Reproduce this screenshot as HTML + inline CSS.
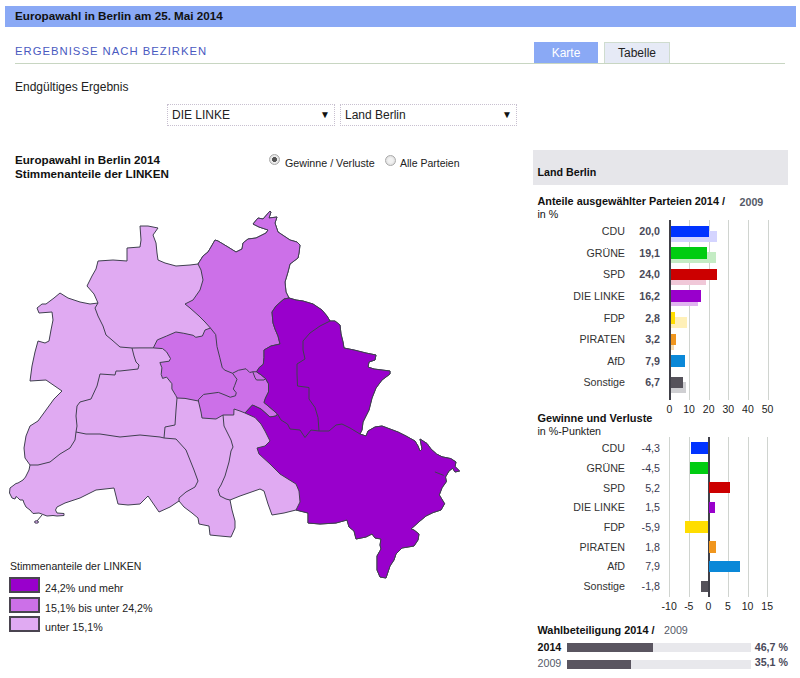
<!DOCTYPE html>
<html><head><meta charset="utf-8"><style>
html,body{margin:0;padding:0;background:#fff;width:800px;height:678px;overflow:hidden;position:relative;font-family:"Liberation Sans",sans-serif;}
.t{position:absolute;white-space:nowrap;line-height:1;}
.r{position:absolute;}
</style></head><body>
<svg width="800" height="678" style="position:absolute;left:0;top:0">
<g stroke="#404050" stroke-width="1" stroke-linejoin="round" fill-rule="nonzero">
<polygon points="87,286 92,276 96,269 98,261 113,260 127,261 127,248 140,247 141,240 140,226 148,226 158,228 153,235 156,243 157,253 158,260 165,263 176,266 190,265 198,264 203,256 208,252 211,247 215,240 218,241 228,247 236,252 242,249 243,243 248,239 256,238 266,233 268,230 259,227 253,224 258,218 263,219 270,211 271,212 269,218 277,217 275,223 278,232 290,240 297,242 300,245 299,253 298,258 290,264 288,272 285,282 286,292 289,298 296,300 303,301 313,304 322,310 327,316 330,321 335,321 340,325 341,334 343,342 344,348 354,350 366,353 376,355 375,360 369,362 368,367 374,369 382,370 390,371 390,374 382,380 376,388 372,398 369,410 366,416 363,422 362,430 360,434 366,436 368,431 375,427 382,426 390,429 398,432 406,436 415,441 418,446 420,451 422,449 420,439 427,443.5 431,449 436.6,454 442,456.8 450.8,458.6 456,462 455,466.5 459.6,471 455,472 452.6,468.3 449,471 445.5,477 446.4,481.6 442,487.8 439.3,494.9 444.6,503.7 441,510 433,512.6 426,516 420,521 411,529 414,530 419,534 418,540 414,546 402,548 396,554 394,560 390,566 386,578 380,577 377,570 377,556 381,549 380,545 381,539 375,538 372,534 366,537 356,539 354,531 349,527 347,520 336,523 320,524 308,523 308,513 296,510 284,513 272,515 268,504 264,491 260,489 240,496 230,500 232,510 235,521 235,528 231,537 220,536 210,535 209,526 199,524 198,518 192,513 184,507 179,501 170,507 159,512 148,496 140,504 128,505 118,504 116,496 114,488 96,490 80,498 65,503 57,507 55.5,510 57,513 64,513.5 64,515.5 57,516 53,515.5 47,516 43,514.5 39,513 33,513.5 30,510 26,507 24,503 23,500 20,500 17.5,497.5 16,496.5 15,499 12,498 9.5,493 10,488 16,483.5 18,483 23,480 25.5,477 29,470 30,465 25,458 24,448 26,436 30,426 38,421 46,410 54,399 62,391 46,380 30,381 32,366 35,352 38,341 45,343 49,341 51,330 53,320 52,312 39,313 37,308 42,304 46,304 54,298 60,293 68,298 80,302 90,304 98,303 94,294" fill="#e0aaf2"/>
<polygon points="198,264 203,256 208,252 211,247 215,240 218,241 228,247 236,252 242,249 243,243 248,239 256,238 266,233 268,230 259,227 253,224 258,218 263,219 270,211 271,212 269,218 277,217 275,223 278,232 290,240 297,242 300,245 299,253 298,258 290,264 288,272 285,282 286,292 289,298 284,299 276,306 272,312 273,323 275,329 278,336 280,344 271,346 264,350 264,357.5 263.3,364.3 259.5,367.25 256.5,371.75 261,374.75 265.5,378.5 268.5,383.75 268.5,392 265.5,398 264,402.5 270,407.5 277.5,414 276,416 270,417 261,409 252.5,405 245,413 240,411 234,409 233.75,415 223,415 216,419 202,418 201,412 198.4,401 185,398.4 177,398 175.9,395.7 171.9,389 171.9,383.7 166.6,377.1 162.6,378.4 161.2,374.4 161.9,367.8 159.9,362.5 169.2,361.2 170.5,358.5 166.6,351.9 162.6,348.6 153.3,347.9 157.3,339.9 166.6,336 175.9,332 183.8,333.3 193.1,335.3 195.8,337.3 202.4,336 205,330 210.4,328 205,322 199,316 190,308 185,304 193,300 200,290 203,280 201,270" fill="#cc70e8"/>
<polygon points="289,298 296,300 303,301 313,304 322,310 327,316 330,321 335,321 340,325 341,334 343,342 344,348 354,350 366,353 376,355 375,360 369,362 368,367 374,369 382,370 390,371 390,374 382,380 376,388 372,398 369,410 366,416 363,422 362,430 360,434 366,436 368,431 375,427 382,426 390,429 398,432 406,436 415,441 418,446 420,451 422,449 420,439 427,443.5 431,449 436.6,454 442,456.8 450.8,458.6 456,462 455,466.5 459.6,471 455,472 452.6,468.3 449,471 445.5,477 446.4,481.6 442,487.8 439.3,494.9 444.6,503.7 441,510 433,512.6 426,516 420,521 411,529 414,530 419,534 418,540 414,546 402,548 396,554 394,560 390,566 386,578 380,577 377,570 377,556 381,549 380,545 381,539 375,538 372,534 366,537 356,539 354,531 349,527 347,520 336,523 320,524 308,523 308,513 296,510 300,502 299,491 296,484 280,474 270,464 259,454 257,448 265,446 270,441 265,431 261,424 255,417.5 245,413 252.5,405 261,409 270,417 276,416 277.5,414 270,407.5 264,402.5 265.5,398 268.5,392 268.5,383.75 265.5,378.5 261,374.75 256.5,371.75 259.5,367.25 263.3,364.3 264,357.5 264,350 271,346 280,344 278,336 275,329 273,323 272,312 276,306 284,299" fill="#9900cc"/>
</g><g stroke="#404050" stroke-width="1" fill="none" stroke-linejoin="round">
<polyline points="98,303 95,308 98,316 103,326 106,335 112,340 120,347 132,348 140,347.9 153.3,347.9"/>
<polyline points="132,348 134,356 136,362 139,365 138,369 120,371 116,371 115,375 100,374 97,386 91,399 80,402 77,406 76,416 77,426 76,432"/>
<polyline points="76,432 75,440 70,448 60,454 50,462 38,465 30,465"/>
<polyline points="76,432 86,434 100,434 120,437 140,435 160,437 164,438"/>
<polyline points="177,398 176,410 175,425 165,427 164,438"/>
<polyline points="164,438 176,439 186,450 190,460 194,470 198,481 195,487 186,492 179,498 179,501"/>
<polyline points="223,415 224,426 231,440 233,447 231,451 229,462 225,476 221,485 218,490 220,496 226,499 230,500"/>
<polyline points="210.4,328 215.7,334.6 217,346.6 219.7,357.2 222.3,367.8 225,370.25 232.5,373.25"/>
<polyline points="232.5,373.25 237,379.25 234.75,385.25 233.25,389 236.25,392.75 235.5,395.75 230.25,397.25 225,395 218.4,392.4 203.7,394.4 198.4,399.7 198.4,401"/>
<polyline points="232.5,373.25 238.5,370.25 246,368.75 249.75,372.5 252.75,371.75 256.5,371.75"/>
<polyline points="252.75,371.75 255,377.75 256.5,380 264,380 265.5,378.5"/>
<polyline points="330,321 320,326 310,333 303,341 303,350 305,359 297,364 297,374 297.5,386 309,387.5 309,399 315,407.5 318,417.5 319,431"/>
<polyline points="277.5,414 281,420 287.5,424 290,429 300,430 305,437.5 311,430 319,431 329,431 336,425 342,424 350,428 360,434"/>
<polyline points="434.9,471.9 443.7,475.4"/>
<polyline points="42,515 37,521"/>
<ellipse cx="36.5" cy="522" rx="2" ry="1.2" fill="#e0aaf2"/>
</g></svg>
<div class="r" style="left:5px;top:6px;width:791px;height:20.5px;background:#8aa9f5;"></div>
<div class="t" style="left:15px;top:10.20px;font-size:11.7px;font-weight:bold;color:#111;">Europawahl in Berlin am 25. Mai 2014</div>
<div class="t" style="left:15px;top:46.43px;font-size:11.3px;font-weight:normal;color:#4a5abf;letter-spacing:1.0px;">ERGEBNISSE NACH BEZIRKEN</div>
<div class="r" style="left:15px;top:63px;width:770px;height:1px;background:#c8d6c2;"></div>
<div class="r" style="left:534px;top:42px;width:64px;height:21px;background:#8aa9f5;"></div>
<div class="t" style="left:516px;width:100px;text-align:center;top:47.34px;font-size:12px;font-weight:normal;color:#fff;">Karte</div>
<div class="r" style="left:604px;top:42px;width:66px;height:21px;background:#e6eaf6;box-sizing:border-box;border:1px solid #cfdccf;border-bottom:none;"></div>
<div class="t" style="left:587px;width:100px;text-align:center;top:47.34px;font-size:12px;font-weight:normal;color:#222;">Tabelle</div>
<div class="t" style="left:15px;top:80.64px;font-size:12px;font-weight:normal;color:#222;">Endgültiges Ergebnis</div>
<div class="r" style="left:167px;top:104px;width:168px;height:21.5px;background:#fff;box-sizing:border-box;border:1px dotted #c8c0d0;"></div>
<div class="t" style="left:172px;top:109.34px;font-size:12px;font-weight:normal;color:#222;">DIE LINKE</div>
<div class="t" style="left:320px;top:109.53px;font-size:10px;font-weight:normal;color:#111;">&#9660;</div>
<div class="r" style="left:340px;top:104px;width:177px;height:21.5px;background:#fff;box-sizing:border-box;border:1px dotted #c8c0d0;"></div>
<div class="t" style="left:345px;top:109.34px;font-size:12px;font-weight:normal;color:#222;">Land Berlin</div>
<div class="t" style="left:502px;top:109.53px;font-size:10px;font-weight:normal;color:#111;">&#9660;</div>
<div class="t" style="left:15px;top:154.14px;font-size:11.65px;font-weight:bold;color:#111;">Europawahl in Berlin 2014</div>
<div class="t" style="left:15px;top:167.94px;font-size:11.65px;font-weight:bold;color:#111;">Stimmenanteile der LINKEN</div>
<div class="r" style="left:269px;top:154px;width:11px;height:11px;border-radius:50%;background:radial-gradient(circle,#555 0 2.2px,#eee 2.8px,#ddd 5px);border:1px solid #aaa;box-sizing:border-box"></div>
<div class="t" style="left:285px;top:157.94px;font-size:10.7px;font-weight:normal;color:#222;">Gewinne / Verluste</div>
<div class="r" style="left:385px;top:154.5px;width:11px;height:11px;border-radius:50%;background:radial-gradient(circle,#f2f2f2 0 2px,#ddd 5px);border:1px solid #aaa;box-sizing:border-box"></div>
<div class="t" style="left:400px;top:158.11px;font-size:10.5px;font-weight:normal;color:#222;">Alle Parteien</div>
<div class="r" style="left:533px;top:150px;width:255px;height:35px;background:#e6e6ea;"></div>
<div class="t" style="left:537.5px;top:167.19px;font-size:10.7px;font-weight:bold;color:#111;">Land Berlin</div>
<div class="t" style="left:537.5px;top:196.42px;font-size:10.85px;font-weight:bold;color:#111;">Anteile ausgewählter Parteien 2014 /</div>
<div class="t" style="left:739.5px;top:196.54px;font-size:10.7px;font-weight:bold;color:#555a68;">2009</div>
<div class="t" style="left:537.5px;top:209.44px;font-size:10.7px;font-weight:normal;color:#111;">in %</div>
<div class="r" style="left:669px;top:220px;width:2px;height:179.5px;background:#404048;"></div>
<div class="t" style="left:619.5px;width:100px;text-align:center;top:403.71px;font-size:10.5px;font-weight:normal;color:#222;">0</div>
<div class="r" style="left:689px;top:220px;width:1px;height:179.5px;background:#d0d4d0;"></div>
<div class="t" style="left:639.1px;width:100px;text-align:center;top:403.71px;font-size:10.5px;font-weight:normal;color:#222;">10</div>
<div class="r" style="left:709px;top:220px;width:1px;height:179.5px;background:#d0d4d0;"></div>
<div class="t" style="left:658.7px;width:100px;text-align:center;top:403.71px;font-size:10.5px;font-weight:normal;color:#222;">20</div>
<div class="r" style="left:728px;top:220px;width:1px;height:179.5px;background:#d0d4d0;"></div>
<div class="t" style="left:678.3px;width:100px;text-align:center;top:403.71px;font-size:10.5px;font-weight:normal;color:#222;">30</div>
<div class="r" style="left:748px;top:220px;width:1px;height:179.5px;background:#d0d4d0;"></div>
<div class="t" style="left:697.9px;width:100px;text-align:center;top:403.71px;font-size:10.5px;font-weight:normal;color:#222;">40</div>
<div class="r" style="left:768px;top:220px;width:1px;height:179.5px;background:#d0d4d0;"></div>
<div class="t" style="left:717.5px;width:100px;text-align:center;top:403.71px;font-size:10.5px;font-weight:normal;color:#222;">50</div>
<div class="r" style="left:671px;top:230.6px;width:46.128px;height:11px;background:#d4d4ff;"></div>
<div class="r" style="left:671px;top:225.6px;width:37.7px;height:11.5px;background:#0033ff;"></div>
<div class="t" style="right:175px;top:226.24px;font-size:10.7px;font-weight:normal;color:#333;">CDU</div>
<div class="t" style="right:140px;top:226.24px;font-size:10.7px;font-weight:bold;color:#4a4a5a;">20,0</div>
<div class="r" style="left:671px;top:252.2px;width:44.756px;height:11px;background:#c4ecc4;"></div>
<div class="r" style="left:671px;top:247.2px;width:35.936px;height:11.5px;background:#00cc11;"></div>
<div class="t" style="right:175px;top:247.84px;font-size:10.7px;font-weight:normal;color:#333;">GRÜNE</div>
<div class="t" style="right:140px;top:247.84px;font-size:10.7px;font-weight:bold;color:#4a4a5a;">19,1</div>
<div class="r" style="left:671px;top:273.8px;width:35.348px;height:11px;background:#f0c8d8;"></div>
<div class="r" style="left:671px;top:268.8px;width:45.54px;height:11.5px;background:#cc0000;"></div>
<div class="t" style="right:175px;top:269.44px;font-size:10.7px;font-weight:normal;color:#333;">SPD</div>
<div class="t" style="right:140px;top:269.44px;font-size:10.7px;font-weight:bold;color:#4a4a5a;">24,0</div>
<div class="r" style="left:671px;top:295.4px;width:27.311999999999998px;height:11px;background:#e0b4f0;"></div>
<div class="r" style="left:671px;top:290.4px;width:30.252px;height:11.5px;background:#9900cc;"></div>
<div class="t" style="right:175px;top:291.04px;font-size:10.7px;font-weight:normal;color:#333;">DIE LINKE</div>
<div class="t" style="right:140px;top:291.04px;font-size:10.7px;font-weight:bold;color:#4a4a5a;">16,2</div>
<div class="r" style="left:671px;top:317.0px;width:15.552px;height:11px;background:#fff0b8;"></div>
<div class="r" style="left:671px;top:312.0px;width:3.9879999999999995px;height:11.5px;background:#ffdd00;"></div>
<div class="t" style="right:175px;top:312.64px;font-size:10.7px;font-weight:normal;color:#333;">FDP</div>
<div class="t" style="right:140px;top:312.64px;font-size:10.7px;font-weight:bold;color:#4a4a5a;">2,8</div>
<div class="r" style="left:671px;top:338.6px;width:2.5px;height:11px;background:#f8dcb0;"></div>
<div class="r" style="left:671px;top:333.6px;width:4.772px;height:11.5px;background:#f0961e;"></div>
<div class="t" style="right:175px;top:334.24px;font-size:10.7px;font-weight:normal;color:#333;">PIRATEN</div>
<div class="t" style="right:140px;top:334.24px;font-size:10.7px;font-weight:bold;color:#4a4a5a;">3,2</div>
<div class="r" style="left:671px;top:355.20000000000005px;width:13.984px;height:11.5px;background:#0a88d8;"></div>
<div class="t" style="right:175px;top:355.84px;font-size:10.7px;font-weight:normal;color:#333;">AfD</div>
<div class="t" style="right:140px;top:355.84px;font-size:10.7px;font-weight:bold;color:#4a4a5a;">7,9</div>
<div class="r" style="left:671px;top:381.8px;width:15.16px;height:11px;background:#cfcfd2;"></div>
<div class="r" style="left:671px;top:376.8px;width:11.632px;height:11.5px;background:#55525a;"></div>
<div class="t" style="right:175px;top:377.44px;font-size:10.7px;font-weight:normal;color:#333;">Sonstige</div>
<div class="t" style="right:140px;top:377.44px;font-size:10.7px;font-weight:bold;color:#4a4a5a;">6,7</div>
<div class="t" style="left:537.5px;top:413.09px;font-size:11px;font-weight:bold;color:#111;">Gewinne und Verluste</div>
<div class="t" style="left:537.5px;top:426.34px;font-size:10.7px;font-weight:normal;color:#222;">in %-Punkten</div>
<div class="r" style="left:669px;top:437px;width:1px;height:159.5px;background:#d0d4d0;"></div>
<div class="t" style="left:619.1999999999999px;width:100px;text-align:center;top:600.71px;font-size:10.5px;font-weight:normal;color:#222;">-10</div>
<div class="r" style="left:689px;top:437px;width:1px;height:159.5px;background:#d0d4d0;"></div>
<div class="t" style="left:638.8px;width:100px;text-align:center;top:600.71px;font-size:10.5px;font-weight:normal;color:#222;">-5</div>
<div class="r" style="left:707.5px;top:437px;width:2px;height:159.5px;background:#404048;"></div>
<div class="t" style="left:658.4px;width:100px;text-align:center;top:600.71px;font-size:10.5px;font-weight:normal;color:#222;">0</div>
<div class="r" style="left:728px;top:437px;width:1px;height:159.5px;background:#d0d4d0;"></div>
<div class="t" style="left:678.0px;width:100px;text-align:center;top:600.71px;font-size:10.5px;font-weight:normal;color:#222;">5</div>
<div class="r" style="left:748px;top:437px;width:1px;height:159.5px;background:#d0d4d0;"></div>
<div class="t" style="left:697.6px;width:100px;text-align:center;top:600.71px;font-size:10.5px;font-weight:normal;color:#222;">10</div>
<div class="r" style="left:767px;top:437px;width:1px;height:159.5px;background:#d0d4d0;"></div>
<div class="t" style="left:717.1999999999999px;width:100px;text-align:center;top:600.71px;font-size:10.5px;font-weight:normal;color:#222;">15</div>
<div class="r" style="left:691.144px;top:442.4px;width:16.855999999999998px;height:11.5px;background:#0033ff;"></div>
<div class="t" style="right:175px;top:443.04px;font-size:10.7px;font-weight:normal;color:#333;">CDU</div>
<div class="t" style="right:140px;top:443.04px;font-size:10.7px;font-weight:normal;color:#3a3a50;">-4,3</div>
<div class="r" style="left:690.36px;top:462.14px;width:17.64px;height:11.5px;background:#00cc11;"></div>
<div class="t" style="right:175px;top:462.78px;font-size:10.7px;font-weight:normal;color:#333;">GRÜNE</div>
<div class="t" style="right:140px;top:462.78px;font-size:10.7px;font-weight:normal;color:#3a3a50;">-4,5</div>
<div class="r" style="left:709.4px;top:481.88px;width:20.384px;height:11.5px;background:#cc0000;"></div>
<div class="t" style="right:175px;top:482.52px;font-size:10.7px;font-weight:normal;color:#333;">SPD</div>
<div class="t" style="right:140px;top:482.52px;font-size:10.7px;font-weight:normal;color:#3a3a50;">5,2</div>
<div class="r" style="left:709.4px;top:501.62px;width:5.88px;height:11.5px;background:#9900cc;"></div>
<div class="t" style="right:175px;top:502.26px;font-size:10.7px;font-weight:normal;color:#333;">DIE LINKE</div>
<div class="t" style="right:140px;top:502.26px;font-size:10.7px;font-weight:normal;color:#3a3a50;">1,5</div>
<div class="r" style="left:684.872px;top:521.36px;width:23.128px;height:11.5px;background:#ffdd00;"></div>
<div class="t" style="right:175px;top:522.00px;font-size:10.7px;font-weight:normal;color:#333;">FDP</div>
<div class="t" style="right:140px;top:522.00px;font-size:10.7px;font-weight:normal;color:#3a3a50;">-5,9</div>
<div class="r" style="left:709.4px;top:541.0999999999999px;width:7.056px;height:11.5px;background:#f0961e;"></div>
<div class="t" style="right:175px;top:541.74px;font-size:10.7px;font-weight:normal;color:#333;">PIRATEN</div>
<div class="t" style="right:140px;top:541.74px;font-size:10.7px;font-weight:normal;color:#3a3a50;">1,8</div>
<div class="r" style="left:709.4px;top:560.8399999999999px;width:30.968px;height:11.5px;background:#0a88d8;"></div>
<div class="t" style="right:175px;top:561.48px;font-size:10.7px;font-weight:normal;color:#333;">AfD</div>
<div class="t" style="right:140px;top:561.48px;font-size:10.7px;font-weight:normal;color:#3a3a50;">7,9</div>
<div class="r" style="left:700.944px;top:580.5799999999999px;width:7.056px;height:11.5px;background:#55525a;"></div>
<div class="t" style="right:175px;top:581.22px;font-size:10.7px;font-weight:normal;color:#333;">Sonstige</div>
<div class="t" style="right:140px;top:581.22px;font-size:10.7px;font-weight:normal;color:#3a3a50;">-1,8</div>
<div class="t" style="left:537.5px;top:625.17px;font-size:10.9px;font-weight:bold;color:#111;">Wahlbeteiligung 2014 /</div>
<div class="t" style="left:664px;top:625.34px;font-size:10.7px;font-weight:normal;color:#555a68;">2009</div>
<div class="t" style="left:537.5px;top:641.94px;font-size:10.7px;font-weight:bold;color:#111;">2014</div>
<div class="t" style="left:537.5px;top:657.94px;font-size:10.7px;font-weight:normal;color:#555a68;">2009</div>
<div class="r" style="left:566.5px;top:643px;width:184px;height:9px;background:#e8e8ec;"></div>
<div class="r" style="left:566.5px;top:643px;width:86px;height:9px;background:#5a5560;"></div>
<div class="r" style="left:566.5px;top:659.5px;width:184px;height:9px;background:#e8e8ec;"></div>
<div class="r" style="left:566.5px;top:659.5px;width:64.5px;height:9px;background:#5a5560;"></div>
<div class="t" style="right:12px;top:641.94px;font-size:10.7px;font-weight:bold;color:#4a4a5a;">46,7 %</div>
<div class="t" style="right:12px;top:657.44px;font-size:10.7px;font-weight:bold;color:#4a4a5a;">35,1 %</div>
<div class="t" style="left:10px;top:560.91px;font-size:10.5px;font-weight:normal;color:#222;">Stimmenanteile der LINKEN</div>
<div class="r" style="left:9px;top:577.0px;width:31px;height:16px;background:#9900cc;box-sizing:border-box;border:2px solid #4a4450;"></div>
<div class="t" style="left:45px;top:583.24px;font-size:10.7px;font-weight:normal;color:#222;">24,2% und mehr</div>
<div class="r" style="left:9px;top:596.6px;width:31px;height:16px;background:#cc70e8;box-sizing:border-box;border:2px solid #4a4450;"></div>
<div class="t" style="left:45px;top:602.84px;font-size:10.7px;font-weight:normal;color:#222;">15,1% bis unter 24,2%</div>
<div class="r" style="left:9px;top:616.2px;width:31px;height:16px;background:#e0aaf2;box-sizing:border-box;border:2px solid #4a4450;"></div>
<div class="t" style="left:45px;top:622.44px;font-size:10.7px;font-weight:normal;color:#222;">unter 15,1%</div>
</body></html>
